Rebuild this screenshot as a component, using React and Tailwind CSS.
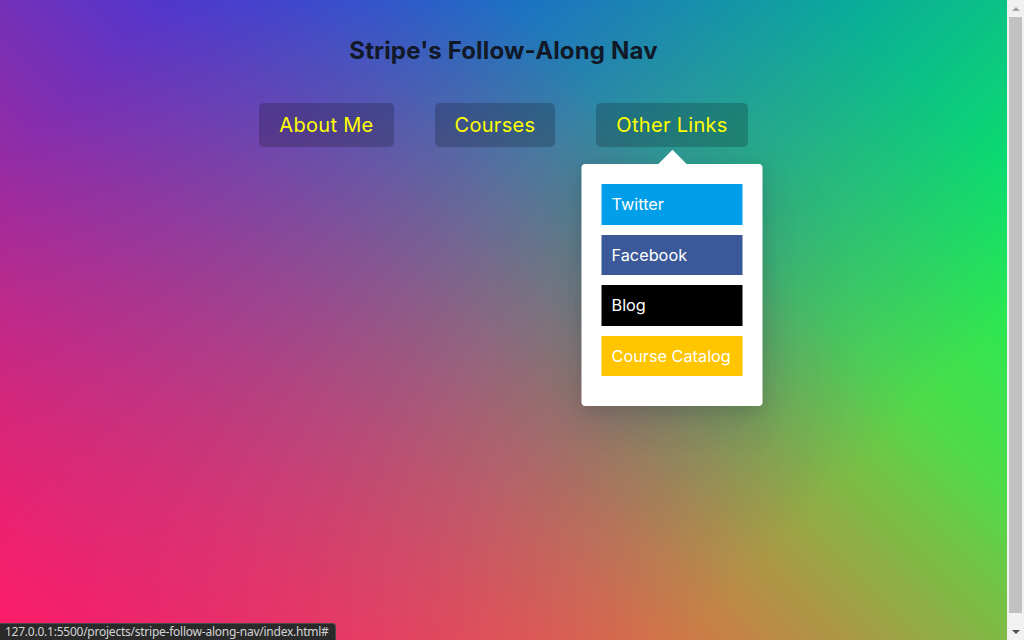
const links = [
  { label: "Twitter", color: "bg-[#019fe9]" },
  { label: "Facebook", color: "bg-[#3b5998]" },
  { label: "Blog", color: "bg-black" },
  { label: "Course Catalog", color: "bg-[#ffc600]" },
];

const Dropdown = () => {
  return (
    <div className="absolute left-1/2 top-[calc(100%+17px)] -translate-x-1/2 w-[181px] bg-white rounded-[4px] p-5 shadow-[0_50px_100px_rgba(50,50,93,0.1),0_15px_35px_rgba(50,50,93,0.15),0_5px_15px_rgba(0,0,0,0.1)]">
      <span className="absolute left-1/2 top-0 w-5 h-5 bg-white -translate-x-1/2 -translate-y-1/2 rotate-45" />
      <ul className="relative flex flex-col gap-[10px] pb-[10px]">
        {links.map((l) => (
          <li key={l.label}>
            <a href="#" className={`block whitespace-nowrap overflow-hidden ${l.color} text-white p-[10px] text-[16.3px] leading-[20.6px]`}>
              {l.label}
            </a>
          </li>
        ))}
      </ul>
    </div>
  );
};

const Scrollbar = () => (
  <div className="w-[17px] h-full bg-[#f1f1f1] flex flex-col items-center shrink-0">
    <div className="h-[17px] w-full flex items-center justify-center">
      <div className="w-0 h-0 border-l-[4px] border-r-[4px] border-b-[4px] border-l-transparent border-r-transparent border-b-[#a3a3a3]" />
    </div>
    <div className="flex-1 w-full px-[2px] pb-[10px]">
      <div className="w-full h-full bg-[#c1c1c1]" />
    </div>
    <div className="h-[17px] w-full flex items-center justify-center">
      <div className="w-0 h-0 border-l-[4px] border-r-[4px] border-t-[4px] border-l-transparent border-r-transparent border-t-[#505050]" />
    </div>
  </div>
);

export default function App() {
  const navItems = ["About Me", "Courses", "Other Links"];
  return (
    <div className="relative flex w-[1024px] h-[640px] overflow-hidden font-['Inter',sans-serif]">
      <div className="flex-1 h-[651px] flex flex-col items-center bg-[linear-gradient(45deg,hsla(340,100%,55%,1)_0%,hsla(340,100%,55%,0)_70%),linear-gradient(135deg,hsla(225,95%,50%,1)_10%,hsla(225,95%,50%,0)_80%),linear-gradient(225deg,hsla(140,90%,50%,1)_10%,hsla(140,90%,50%,0)_80%),linear-gradient(315deg,hsla(35,95%,55%,1)_100%,hsla(35,95%,55%,0)_70%)]">
        <h2 className="mt-[35px] text-[24px] leading-[32px] font-bold tracking-[0.16px] text-[#111827]">
          Stripe's Follow-Along Nav
        </h2>
        <nav className="mt-[36px]">
          <ul className="flex justify-center gap-[41px]">
            {navItems.map((item) => (
              <li key={item} className="relative">
                <a href="#" className="block px-5 py-[10px] text-[20px] leading-[24px] tracking-[0.3px] text-[#ffff00] bg-black/20 rounded-[5px]">
                  {item}
                </a>
                {item === "Other Links" && <Dropdown />}
              </li>
            ))}
          </ul>
        </nav>
      </div>
      <Scrollbar />
      <div className="absolute left-0 bottom-0 h-[17px] pl-[5px] pr-[6px] bg-[#2a2a2a] border-t border-r border-[#4a4a4a] rounded-tr-[4px] text-[12px] leading-[16px] tracking-[-0.24px] text-[#d4d4d4] font-['Noto_Sans',sans-serif]">
        127.0.0.1:5500/projects/stripe-follow-along-nav/index.html#
      </div>
    </div>
  );
}
